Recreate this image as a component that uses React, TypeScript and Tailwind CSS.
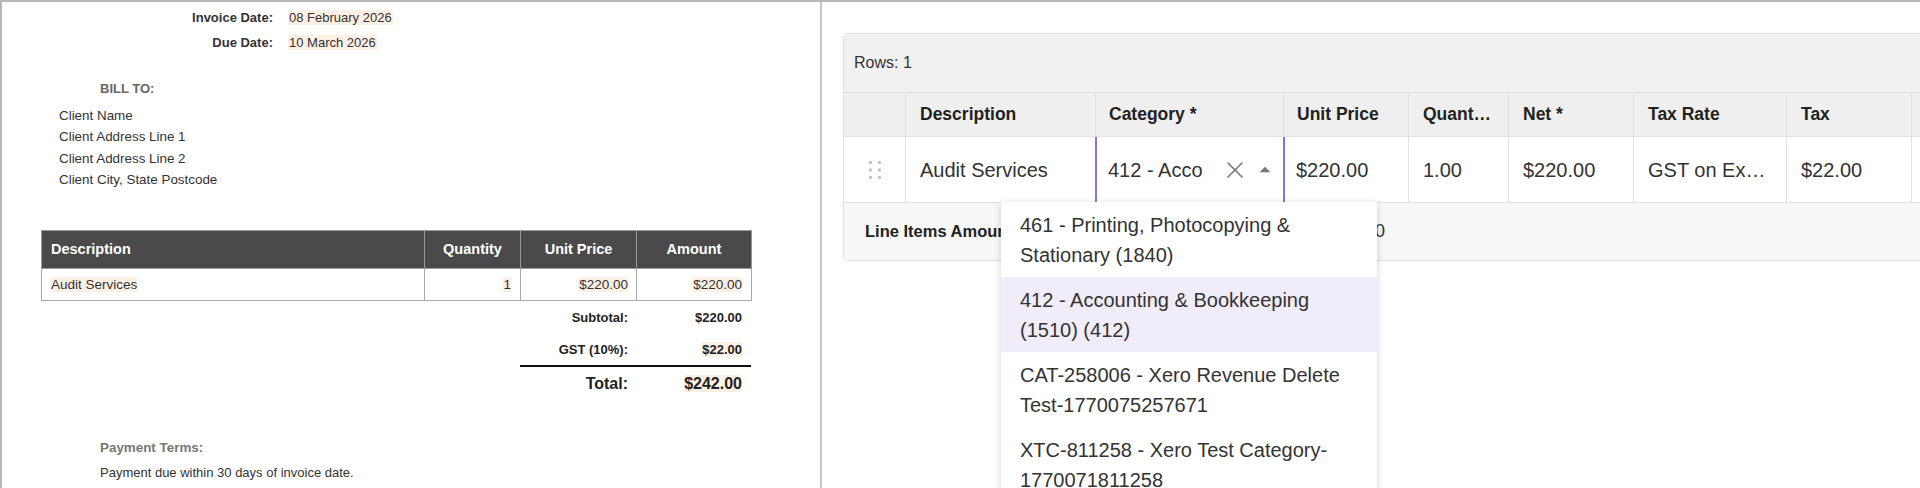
import { X } from "lucide-react";

const peach = "bg-[#fcf0e5]";

function InvoicePreview() {
  return (
    <div className="w-[820px] shrink-0 border-r-2 border-[#c4c4c4] bg-white pt-[3px] text-[13px] text-[#333]">
      {/* dates */}
      <div className="leading-[25px]">
        <div className="flex">
          <span className="w-[271px] text-right font-bold">Invoice Date:</span>
          <span className="ml-[15px]">
            <span className={`${peach} px-px`}>08 February 2026</span>
          </span>
        </div>
        <div className="flex">
          <span className="w-[271px] text-right font-bold">Due Date:</span>
          <span className="ml-[15px]">
            <span className={`${peach} px-px`}>10 March 2026</span>
          </span>
        </div>
      </div>

      <div className="mt-[23px] pl-[98px] font-bold leading-[21px] text-[#666]">BILL TO:</div>
      <div className="mt-[6px] pl-[57px] text-[13.4px] leading-[21.3px]">
        <div>Client Name</div>
        <div>Client Address Line 1</div>
        <div>Client Address Line 2</div>
        <div>Client City, State Postcode</div>
      </div>

      {/* line items */}
      <div className="ml-[39px] mt-[40px] w-[710px]">
        <table className="w-full table-fixed border-collapse">
          <colgroup>
            <col className="w-[383px]" />
            <col className="w-[96px]" />
            <col className="w-[116px]" />
            <col className="w-[115px]" />
          </colgroup>
          <thead>
            <tr className="h-[38px] bg-[#4a4a4a] text-[14.5px] font-bold text-white">
              <th className="border border-[#9a9a9a] pl-[9px] text-left">Description</th>
              <th className="border border-[#9a9a9a] text-center">Quantity</th>
              <th className="border border-[#9a9a9a] text-center">Unit Price</th>
              <th className="border border-[#9a9a9a] text-center">Amount</th>
            </tr>
          </thead>
          <tbody>
            <tr className="h-[32px] text-[13.5px]">
              <td className="border border-[#a8a8a8] pl-[9px]">
                <span className={peach}>Audit Services</span>
              </td>
              <td className="border border-[#a8a8a8] pr-[9px] text-right">
                <span className={peach}>1</span>
              </td>
              <td className="border border-[#a8a8a8] pr-[8px] text-right">
                <span className={peach}>$220.00</span>
              </td>
              <td className="border border-[#a8a8a8] pr-[9px] text-right">
                <span className={peach}>$220.00</span>
              </td>
            </tr>
          </tbody>
        </table>

        <div className="ml-[479px] w-[231px] font-bold text-[#222]">
          <div className="flex h-[33px] items-center">
            <span className="w-[116px] pr-[8px] text-right">Subtotal:</span>
            <span className="w-[115px] pr-[9px] text-right">$220.00</span>
          </div>
          <div className="flex h-[33px] items-center border-b-2 border-[#111]">
            <span className="w-[116px] pr-[8px] text-right">GST (10%):</span>
            <span className="w-[115px] pr-[9px] text-right">
              <span className={peach}>$22.00</span>
            </span>
          </div>
          <div className="flex h-[34px] items-center text-[16px]">
            <span className="w-[116px] pr-[8px] text-right">Total:</span>
            <span className="w-[115px] pr-[9px] text-right">
              <span className={peach}>$242.00</span>
            </span>
          </div>
        </div>
      </div>

      <div className="mt-[36px] pl-[98px] text-[13.4px] font-bold leading-[21px] text-[#777]">Payment Terms:</div>
      <div className="mt-[4px] pl-[98px] leading-[21px]">Payment due within 30 days of invoice date.</div>
    </div>
  );
}

function DragHandle() {
  return (
    <svg width="14" height="20" viewBox="0 0 14 20" fill="#c2c2c2">
      {[2.5, 10, 17.5].map((cy) => (
        <g key={cy}>
          <circle cx="2.5" cy={cy} r="1.7" />
          <circle cx="11.5" cy={cy} r="1.7" />
        </g>
      ))}
    </svg>
  );
}

const categories = [
  "461 - Printing, Photocopying & Stationary (1840)",
  "412 - Accounting & Bookkeeping (1510) (412)",
  "CAT-258006 - Xero Revenue Delete Test-1770075257671",
  "XTC-811258 - Xero Test Category-1770071811258",
];

function LineItemsGrid() {
  const cell = "flex h-full shrink-0 items-center border-l border-[#e0e0e0]";
  return (
    <div className="relative flex-1 overflow-hidden bg-white pl-[21px] pt-[31px]">
      <div className="w-[1250px] overflow-hidden rounded-[5px] border border-[#e0e0e0]">
        <div className="flex h-[58px] items-center bg-[#f1f1f1] px-[10px] text-[16px] text-[#333]">Rows: 1</div>

        {/* header */}
        <div className="flex h-[44px] border-t border-[#e0e0e0] bg-[#efefef] text-[17.5px] font-bold text-[#222]">
          <div className="h-full w-[61px] shrink-0" />
          <div className={`${cell} w-[190px] pl-[14px]`}>Description</div>
          <div className={`${cell} w-[188px] pl-[13px]`}>Category *</div>
          <div className={`${cell} w-[125px] pl-[13px]`}>Unit Price</div>
          <div className={`${cell} w-[100px] pl-[14px] pr-[16px]`}>
            <span className="truncate">Quantity</span>
          </div>
          <div className={`${cell} w-[125px] pl-[14px]`}>Net *</div>
          <div className={`${cell} w-[153px] pl-[14px]`}>Tax Rate</div>
          <div className={`${cell} w-[125px] pl-[14px]`}>Tax</div>
          <div className={`${cell} w-[200px] pl-[14px]`}>Gross</div>
        </div>

        {/* row */}
        <div className="flex h-[66px] border-t border-[#e0e0e0] bg-white text-[20px] text-[#333]">
          <div className="flex h-full w-[61px] shrink-0 items-center justify-center">
            <DragHandle />
          </div>
          <div className={`${cell} w-[190px] pl-[14px]`}>Audit Services</div>
          <div className="flex h-full w-[190px] shrink-0 items-center border-x-2 border-[#8f72d6] pl-[11px]">
            <span className="w-[95px] overflow-hidden whitespace-nowrap">412 - Accounting &amp; Bookkeeping</span>
            <X size={28} strokeWidth={1.3} color="#777" className="ml-[18px] shrink-0" />
            <svg width="26" height="26" viewBox="0 0 24 24" fill="#777" className="ml-[3px] shrink-0">
              <path d="M7 14l5-5 5 5z" />
            </svg>
          </div>
          <div className="flex h-full w-[123px] shrink-0 items-center pl-[11px]">$220.00</div>
          <div className={`${cell} w-[100px] pl-[14px]`}>1.00</div>
          <div className={`${cell} w-[125px] pl-[14px]`}>$220.00</div>
          <div className={`${cell} w-[153px] pl-[14px] pr-[14px]`}>
            <span className="truncate">GST on Expenses</span>
          </div>
          <div className={`${cell} w-[125px] pl-[14px]`}>$22.00</div>
          <div className={`${cell} w-[200px] pl-[14px]`}>$242.00</div>
        </div>

        {/* footer */}
        <div className="flex h-[58px] items-center border-t border-[#e0e0e0] bg-[#f8f8f8] pl-[21px] text-[#222]">
          <span className="w-[455px] shrink-0 text-[16.5px] font-bold">Line Items Amounts (Tax Exclusive):</span>
          <span className="text-[18px] text-[#333]">$220.00</span>
        </div>
      </div>

      {/* category autocomplete options */}
      <div className="absolute left-[179px] top-[200px] w-[376px] bg-white text-[20px] leading-[30px] text-[#333] shadow-[0_2px_8px_rgba(0,0,0,0.18)]">
        {categories.map((c, i) => (
          <div
            key={c}
            className={`flex h-[75px] items-center px-[19px] ${i === 1 ? "bg-[#f0ecf9]" : ""}`}
          >
            {c}
          </div>
        ))}
      </div>
    </div>
  );
}

export default function App() {
  return (
    <div className="flex h-[488px] w-[1920px] overflow-hidden border-l-2 border-t-2 border-[#b8b8b8] bg-white font-['Liberation_Sans',Arial,sans-serif]">
      <InvoicePreview />
      <LineItemsGrid />
    </div>
  );
}
